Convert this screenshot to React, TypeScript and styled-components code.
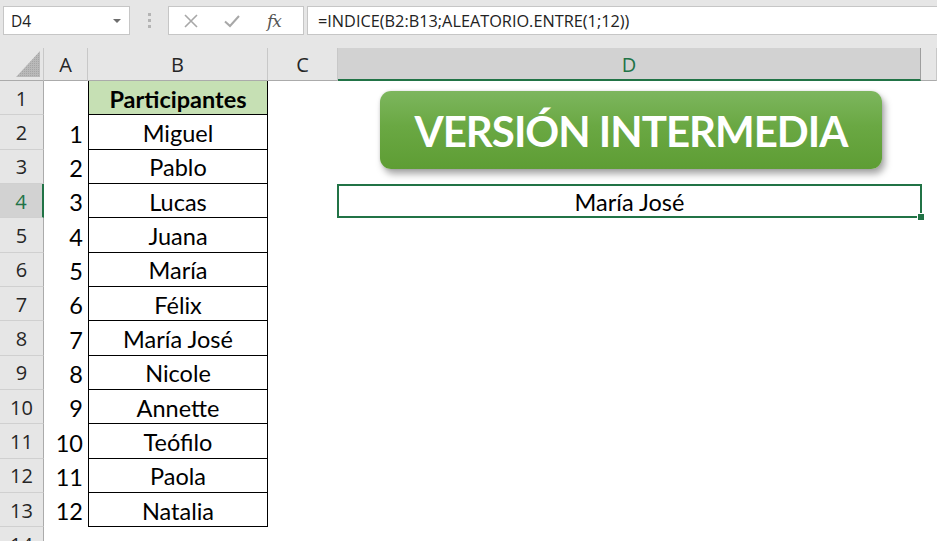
import React from "react";
import styled, { createGlobalStyle, css } from "styled-components";

const Global = createGlobalStyle`
  html, body { margin: 0; padding: 0; background: #ffffff; }
  body { width: 937px; height: 541px; overflow: hidden; font-family: "Lato", "Open Sans", sans-serif; }
  * { box-sizing: border-box; }
`;

const GREEN = "#217346";
const ROW_H = 34.35;

const Page = styled.div`
  width: 937px;
  height: 541px;
  display: flex;
  flex-direction: column;
  background: #ffffff;
  overflow: hidden;
`;

const Toolbar = styled.div`
  flex: 0 0 48px;
  height: 48px;
  background: #e6e6e6;
  display: flex;
  align-items: flex-start;
  padding: 6px 0 0 3px;
`;

const NameBox = styled.div`
  width: 127px;
  height: 29px;
  background: #fff;
  border: 1px solid #c6c6c6;
  display: flex;
  align-items: center;
  justify-content: space-between;
  padding: 0 8px 0 7px;
  font-family: "Open Sans", "Noto Sans", sans-serif;
  font-size: 15.5px;
  color: #222;
`;

const Caret = styled.span`
  width: 0;
  height: 0;
  border-left: 4px solid transparent;
  border-right: 4px solid transparent;
  border-top: 4px solid #6d6d6d;
`;

const Dots = styled.div`
  width: 38px;
  height: 29px;
  display: flex;
  flex-direction: column;
  align-items: center;
  justify-content: center;
  gap: 3px;
  & span {
    width: 3px;
    height: 3px;
    background: #b4b4b4;
  }
`;

const IconBox = styled.div`
  width: 136px;
  height: 29px;
  background: #fff;
  border: 1px solid #c6c6c6;
  display: flex;
  align-items: center;
  padding: 0 0 0 14px;
  gap: 24px;
`;

const Fx = styled.span`
  font-family: "DejaVu Serif", "Liberation Serif", serif;
  font-style: italic;
  font-size: 17px;
  color: #555;
  letter-spacing: -1px;
  margin-left: 2px;
`;

const FormulaInput = styled.div`
  flex: 1;
  height: 29px;
  margin-left: 3px;
  background: #fff;
  border: 1px solid #c6c6c6;
  border-right: none;
  display: flex;
  align-items: center;
  padding-left: 10px;
  font-family: "Open Sans", "Noto Sans", sans-serif;
  font-size: 16.3px;
  color: #222;
  white-space: nowrap;
`;

const Sheet = styled.div`
  flex: 0 0 auto;
  display: grid;
  grid-template-columns: 44px 44px 180px 70px 583px 1fr;
  grid-template-rows: 33px repeat(14, ${ROW_H}px);
`;

const Corner = styled.div`
  background: #e6e6e6;
  border-right: 1px solid #c8c8c8;
  border-bottom: 1px solid #ababab;
  display: flex;
  align-items: flex-end;
  justify-content: flex-end;
  padding: 0 3px 3px 0;
`;

const ColHeader = styled.div<{ $selected?: boolean }>`
  background: #e6e6e6;
  border-right: 1px solid #c8c8c8;
  border-bottom: 1px solid #ababab;
  display: flex;
  align-items: center;
  justify-content: center;
  font-family: "Open Sans", "Noto Sans", sans-serif;
  font-size: 20px;
  color: #262626;
  padding-top: 1px;
  ${(p) =>
    p.$selected &&
    css`
      background: #d2d2d2;
      color: ${GREEN};
      border-bottom: 2px solid ${GREEN};
      border-right: 1px solid #9e9e9e;
    `}
`;

const RowHeader = styled.div<{ $selected?: boolean }>`
  background: #e6e6e6;
  border-right: 1px solid #ababab;
  border-bottom: 1px solid #d0d0d0;
  display: flex;
  align-items: center;
  justify-content: center;
  font-family: "Open Sans", "Noto Sans", sans-serif;
  font-size: 20px;
  color: #262626;
  padding-top: 1px;
  ${(p) =>
    p.$selected &&
    css`
      background: #d2d2d2;
      color: ${GREEN};
      border-right: 2px solid ${GREEN};
    `}
`;

const Cell = styled.div`
  background: #fff;
`;

const NumCell = styled.div`
  display: flex;
  align-items: center;
  justify-content: flex-end;
  padding: 2px 5px 0 0;
  font-family: "Lato", "Open Sans", sans-serif;
  font-size: 23.5px;
  color: #000;
`;

const NameCell = styled.div<{ $head?: boolean }>`
  display: flex;
  align-items: center;
  justify-content: center;
  padding-top: 2px;
  border-left: 1px solid #000;
  border-right: 1px solid #000;
  border-bottom: 1px solid #000;
  font-family: "Lato", "Open Sans", sans-serif;
  font-size: 23.5px;
  color: #000;
  background: #fff;
  white-space: nowrap;
  ${(p) =>
    p.$head &&
    css`
      background: #c6e0b4;
      font-weight: 700;
    `}
`;

const ButtonArea = styled.div`
  grid-column: 5;
  grid-row: 2 / span 3;
  padding: 10px 0 0 42px;
`;

const GreenButton = styled.div`
  width: 502px;
  height: 78px;
  border-radius: 11px;
  background: linear-gradient(180deg, #7db65e 0%, #6aa843 45%, #5e9d34 100%);
  box-shadow: 3px 5px 7px rgba(0, 0, 0, 0.35), 0 0 3px rgba(0, 0, 0, 0.12);
  display: flex;
  align-items: center;
  justify-content: center;
  font-family: "Lato", "Open Sans", sans-serif;
  font-weight: 700;
  font-size: 42px;
  letter-spacing: -1px;
  color: #fff;
  white-space: nowrap;
  padding-top: 2px;
`;

const SelectedCell = styled.div`
  grid-column: 5;
  grid-row: 5;
  position: relative;
  border: 2px solid ${GREEN};
  margin: 0 -1px 0 -1px;
  display: flex;
  align-items: center;
  justify-content: center;
  padding-top: 2px;
  font-family: "Lato", "Open Sans", sans-serif;
  font-size: 23.5px;
  color: #000;
  background: #fff;
`;

const FillHandle = styled.span`
  position: absolute;
  right: -4px;
  bottom: -4px;
  width: 7px;
  height: 7px;
  background: ${GREEN};
  border: 1px solid #fff;
  border-right: none;
  border-bottom: none;
`;

const names = [
  "Miguel",
  "Pablo",
  "Lucas",
  "Juana",
  "María",
  "Félix",
  "María José",
  "Nicole",
  "Annette",
  "Teófilo",
  "Paola",
  "Natalia",
];

const CornerTriangle = () => (
  <svg width="24" height="26" viewBox="0 0 24 26">
    <defs>
      <pattern id="hatch" width="2" height="2" patternUnits="userSpaceOnUse">
        <rect width="2" height="2" fill="#b9b9b9" />
        <rect width="1" height="1" fill="#a5a5a5" />
      </pattern>
    </defs>
    <polygon points="24,0 24,26 0,26" fill="url(#hatch)" />
  </svg>
);

const XIcon = () => (
  <svg width="16" height="16" viewBox="0 0 16 16">
    <path d="M2 2 L14 14 M14 2 L2 14" stroke="#a8a8a8" strokeWidth="1.6" fill="none" />
  </svg>
);

const CheckIcon = () => (
  <svg width="18" height="16" viewBox="0 0 18 16">
    <path d="M2 8.5 L7 13 L16 3" stroke="#a8a8a8" strokeWidth="2" fill="none" />
  </svg>
);

export default function App() {
  const rows = Array.from({ length: 14 }, (_, i) => i + 1);
  return (
    <Page>
      <Global />
      <Toolbar>
        <NameBox>
          D4
          <Caret />
        </NameBox>
        <Dots>
          <span />
          <span />
          <span />
        </Dots>
        <IconBox>
          <XIcon />
          <CheckIcon />
          <Fx>fx</Fx>
        </IconBox>
        <FormulaInput>=INDICE(B2:B13;ALEATORIO.ENTRE(1;12))</FormulaInput>
      </Toolbar>
      <Sheet>
        <Corner>
          <CornerTriangle />
        </Corner>
        <ColHeader>A</ColHeader>
        <ColHeader>B</ColHeader>
        <ColHeader>C</ColHeader>
        <ColHeader $selected>D</ColHeader>
        <ColHeader />
        {rows.map((r) => (
          <React.Fragment key={r}>
            <RowHeader $selected={r === 4}>{r}</RowHeader>
            {r >= 2 && r <= 13 ? <NumCell>{r - 1}</NumCell> : <Cell />}
            {r === 1 ? (
              <NameCell $head>Participantes</NameCell>
            ) : r <= 13 ? (
              <NameCell>{names[r - 2]}</NameCell>
            ) : (
              <Cell />
            )}
            <Cell />
            {r === 1 ? (
              <ButtonArea>
                <GreenButton>VERSIÓN INTERMEDIA</GreenButton>
              </ButtonArea>
            ) : r === 4 ? (
              <SelectedCell>
                María José
                <FillHandle />
              </SelectedCell>
            ) : r === 2 || r === 3 ? null : (
              <Cell />
            )}
            <Cell />
          </React.Fragment>
        ))}
      </Sheet>
    </Page>
  );
}
